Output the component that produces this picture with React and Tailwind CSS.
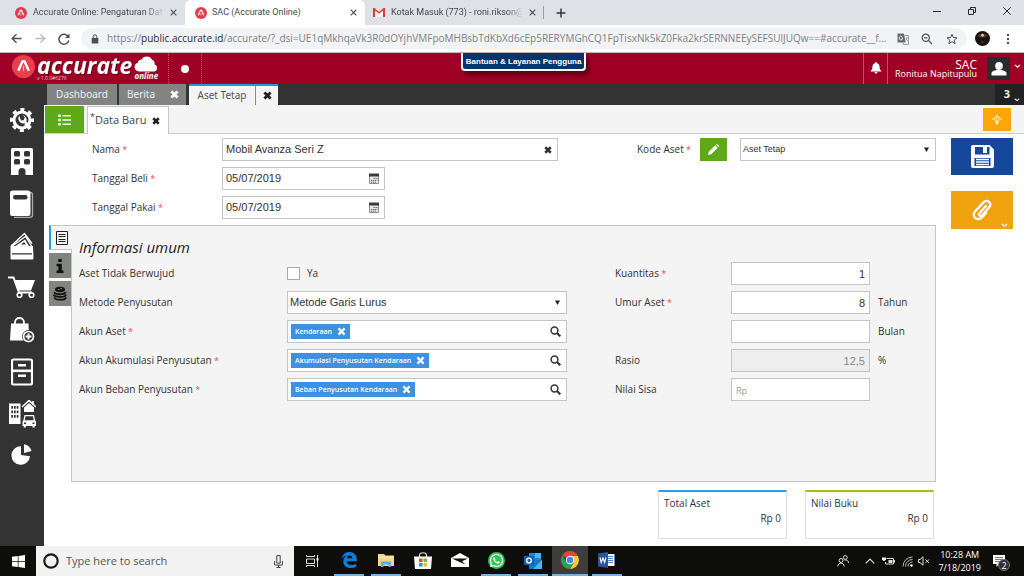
import React from "react";
import { FaWhatsapp } from "react-icons/fa6";

/* ---------- shared pieces ---------- */

const Cross = ({ className = "size-2", w = 5 }) => (
  <svg viewBox="0 0 16 16" className={className} aria-hidden="true">
    <path d="M2.5 2.5 13.5 13.5 M13.5 2.5 2.5 13.5" stroke="currentColor" strokeWidth={w} fill="none" />
  </svg>
);

const ThinCross = ({ className = "size-2" }) => (
  <svg viewBox="0 0 8 8" className={className} aria-hidden="true">
    <path d="M.8 .8 7.2 7.2 M7.2 .8 .8 7.2" stroke="currentColor" strokeWidth="1.3" fill="none" />
  </svg>
);

const Chevron = ({ className }) => (
  <svg viewBox="0 0 8 5" className={className} aria-hidden="true">
    <path d="M1 1 4 3.6 7 1" stroke="currentColor" strokeWidth="1.4" fill="none" />
  </svg>
);

const Logo = ({ className }) => (
  <svg viewBox="0 0 24 24" className={className} aria-hidden="true">
    <circle cx="12" cy="12" r="12" fill="#e63a50" />
    <path d="M6.5 16.5 11 6.5h2l4.5 10" stroke="#fff" strokeWidth="2.4" fill="none" strokeLinejoin="round" />
    <path d="M12 12v5.5" stroke="#fff" strokeWidth="1.6" opacity=".7" />
  </svg>
);

const Star = () => <span className="text-[9px] text-[#f04848]"> *</span>;

/* ---------- browser chrome ---------- */

function TabStrip() {
  return (
    <div className="flex h-[25px] items-center bg-[#dee1e6] font-['Roboto','Open_Sans',sans-serif] text-[9px] text-[#45494d]">
      <div className="flex w-[185px] items-center pl-[15px] pr-2">
        <Logo className="size-3 shrink-0" />
        <span className="ml-[6px] w-[132px] whitespace-nowrap [mask-image:linear-gradient(to_right,black_85%,transparent)]">
          Accurate Online: Pengaturan Dat
        </span>
        <button aria-label="Tutup tab" className="ml-[5px] text-[#4a4d51]"><ThinCross className="size-[7px]" /></button>
      </div>
      <div className="flex h-full w-[180px] items-center rounded-t-md bg-white pl-[10px] pr-2">
        <Logo className="size-3 shrink-0" />
        <span className="ml-[5px] flex-1 whitespace-nowrap">SAC (Accurate Online)</span>
        <button aria-label="Tutup tab" className="text-[#4a4d51]"><ThinCross className="size-[7px]" /></button>
      </div>
      <div className="flex w-[179px] items-center border-r border-[#9a9da1] pl-[8px] pr-2">
        <svg viewBox="0 0 12 9" className="h-[9px] w-3 shrink-0" aria-hidden="true">
          <path d="M1 9V1l5 4.2L11 1v8" stroke="#d93b34" strokeWidth="2" fill="none" />
          <path d="M2.2 2.6V9h7.6V2.6L6 5.8z" fill="#f4f4f4" />
        </svg>
        <span className="ml-[6px] w-[132px] whitespace-nowrap [mask-image:linear-gradient(to_right,black_88%,transparent)]">
          Kotak Masuk (773) - roni.rikson@
        </span>
        <button aria-label="Tutup tab" className="ml-[6px] text-[#4a4d51]"><ThinCross className="size-[7px]" /></button>
      </div>
      <button aria-label="Tab baru" className="ml-3 text-[#33363a]">
        <svg viewBox="0 0 10 10" className="size-[10px]"><path d="M5 .5v9M.5 5h9" stroke="currentColor" strokeWidth="1.5" /></svg>
      </button>
      <div className="ml-auto flex h-full items-center gap-[27px] pb-1 pr-[13px] text-[#2b2b2b]">
        <button aria-label="Minimalkan"><svg viewBox="0 0 8 8" className="size-2"><path d="M0 4.500h8" stroke="currentColor" /></svg></button>
        <button aria-label="Pulihkan">
          <svg viewBox="0 0 8 8" className="size-2"><path d="M.5 2.500h5v5h-5z M2.500 2.500v-2h5v5h-2" stroke="currentColor" fill="none" /></svg>
        </button>
        <button aria-label="Tutup"><svg viewBox="0 0 8 8" className="size-2"><path d="M.3 .3 7.700 7.700M7.700 .3 .3 7.700" stroke="currentColor" /></svg></button>
      </div>
    </div>
  );
}

function AddressBar() {
  return (
    <div className="flex h-[28px] items-center border-b border-[#c9b5b8] bg-white text-[#4b4e52]">
      <button aria-label="Kembali" className="ml-[11px]">
        <svg viewBox="0 0 12 12" className="size-[11px]"><path d="M11.500 6H1.500M6 1.300 1.300 6 6 10.700" stroke="currentColor" strokeWidth="1.500" fill="none" /></svg>
      </button>
      <button aria-label="Maju" className="ml-[13px] text-[#b9bbbe]">
        <svg viewBox="0 0 12 12" className="size-[11px]"><path d="M.5 6h10M6 1.300 10.700 6 6 10.700" stroke="currentColor" strokeWidth="1.400" fill="none" /></svg>
      </button>
      <button aria-label="Muat ulang" className="ml-[12px]">
        <svg viewBox="0 0 12 12" className="size-3">
          <path d="M10.300 3.700A5 5 0 1 0 10.800 7.500" stroke="currentColor" strokeWidth="1.500" fill="none" />
          <path d="M11.500 .5v4.500H7z" fill="currentColor" />
        </svg>
      </button>
      <div className="ml-[11px] flex h-[21px] min-w-0 flex-1 items-center rounded-full bg-[#f1f3f4] pl-[10px] pr-[9px]">
        <svg viewBox="0 0 8 10" className="h-[10px] w-2 shrink-0" aria-hidden="true">
          <path d="M.7 4h6.600v5.500H.7z" fill="currentColor" />
          <path d="M2.200 4.200V2.600a1.800 1.800 0 0 1 3.600 0v1.600" stroke="currentColor" fill="none" />
        </svg>
        <div className="ml-[8px] min-w-0 flex-1 overflow-hidden whitespace-nowrap text-[10px] text-[#7d8186]">
          https://<span className="text-[#2a2d30]">public.accurate.id</span>/accurate/?_dsi=UE1qMkhqaVk3R0dOYjhVMFpoMHBsbTdKbXd6cEp5RERYMGhCQ1FpTisxNk5kZ0Fka2krSERNNEEySEFSUlJUQw==#accurate__f...
        </div>
        <svg viewBox="0 0 12 12" className="size-3 shrink-0" aria-hidden="true">
          <path d="M.5 .5h6.500l1.500 9H.5z" fill="#686c70" />
          <path d="M7.300 2.500h4.200v9H6.500l-.5-2" stroke="#9a9da1" fill="none" />
          <path d="M6 5.100H4.300M5.700 5.100a1.800 1.800 0 1 1-.6-1.400" stroke="#fff" strokeWidth=".8" fill="none" />
          <path d="M8.700 5h2M9.700 4.500c0 2-.6 2.700-1.200 3.200M8.900 6l1.800 2" stroke="#85888c" strokeWidth=".7" fill="none" />
        </svg>
        <svg viewBox="0 0 12 12" className="ml-[12px] size-3 shrink-0" aria-hidden="true">
          <circle cx="4.800" cy="4.800" r="3.600" stroke="currentColor" strokeWidth="1.200" fill="none" />
          <path d="M7.500 7.500 11 11M3.200 4.800h3.200" stroke="currentColor" strokeWidth="1.200" />
        </svg>
        <svg viewBox="0 0 12 12" className="ml-[13px] size-3 shrink-0" aria-hidden="true">
          <path d="M6 1.200 7.400 4.500 11 4.800 8.300 7.100 9.100 10.600 6 8.700 2.900 10.600 3.700 7.100 1 4.800 4.600 4.500z" stroke="currentColor" fill="none" />
        </svg>
      </div>
      <svg viewBox="0 0 16 16" className="ml-[8px] size-[15px] shrink-0" aria-hidden="true">
        <circle cx="8" cy="8" r="8" fill="#17110d" />
        <path d="M3 5c2-3 8-3 10 0l-2 2H5z" fill="#4d3a2b" />
        <circle cx="8" cy="4.500" r="1.500" fill="#d8c4a8" />
        <path d="M5.500 13c0-4 5-4 5 0z" fill="#33261c" />
      </svg>
      <button aria-label="Menu" className="ml-[16px] mr-[14px]">
        <svg viewBox="0 0 4 12" className="h-3 w-1"><g fill="currentColor"><circle cx="2" cy="2" r="1.200" /><circle cx="2" cy="6" r="1.200" /><circle cx="2" cy="10" r="1.200" /></g></svg>
      </button>
    </div>
  );
}

/* ---------- application header ---------- */

function Header() {
  return (
    <header className="relative flex h-[31px] shrink-0 bg-[#a00025] text-white">
      <div className="flex w-[169px] items-start border-r border-dotted border-[#c2556d] pl-3 pt-[2px]">
        <svg viewBox="0 0 24 24" className="size-[23px] shrink-0" aria-hidden="true">
          <circle cx="12" cy="12" r="12" fill="#e6404f" />
          <path d="M6.500 16.500 11 6.500h2l4.500 10" stroke="#fff" strokeWidth="2.600" fill="none" strokeLinejoin="round" />
          <path d="M12 11.500v5" stroke="#fbd5d9" strokeWidth="1.200" />
        </svg>
        <div className="ml-[2px]">
          <div className="text-[23px] font-bold italic leading-[20px] drop-shadow-[1px_1px_0px_rgba(70,0,15,.6)]">accurate</div>
          <div className="whitespace-nowrap text-[5px] leading-[7px] text-[#f0c4cc]">v 1.0.0#6276</div>
        </div>
        <div className="ml-[2px] flex flex-col items-center">
          <svg viewBox="0 0 24 16" className="h-[17px] w-6" aria-hidden="true">
            <path d="M5 16a4.500 4.500 0 0 1-1.200-8.800A4 4 0 0 1 7.500 4 6 6 0 0 1 18 4.200 4.200 4.200 0 0 1 20.500 9 3.600 3.600 0 0 1 20 16z" fill="#fff" />
          </svg>
          <span className="text-[8px] font-bold italic leading-[8px]">online</span>
        </div>
      </div>
      <div className="flex w-[33px] items-center justify-center border-r border-dotted border-[#c2556d]">
        <span className="size-2 rounded-full bg-white" />
      </div>
      <button className="absolute left-[45%] top-0 z-10 h-[18px] whitespace-nowrap rounded-b border-2 border-t-0 border-white bg-[#063567] px-[3px] font-['Liberation_Sans',sans-serif] text-[8px] font-bold leading-[15px] shadow-[3px_4px_4px_rgba(40,0,10,.6)]">
        Bantuan &amp; Layanan Pengguna
      </button>
      <div className="ml-auto flex">
        <button aria-label="Notifikasi" className="flex w-[25px] items-center justify-center border-l border-r border-[#bd4f67] pb-px">
          <svg viewBox="0 0 12 12" className="size-3"><path d="M6 .3c.8 0 1 .6 1 1 1.800.4 2.600 1.800 2.600 3.700 0 2.200.7 3.200 2 4.500H.4C1.700 8.200 2.400 7.200 2.400 5c0-1.900.8-3.300 2.600-3.700 0-.4.200-1 1-1zM4.500 10h3a1.500 1.500 0 0 1-3 0z" fill="#fff" /></svg>
        </button>
        <div className="flex w-[89px] flex-col items-end pt-[6px]">
          <span className="text-[12px] leading-[11px]">SAC</span>
          <span className="whitespace-nowrap text-[9px] leading-[8px]">Ronitua Napitupulu</span>
        </div>
        <button aria-label="Profil" className="ml-[10px] flex items-start gap-1 pr-[3px] pt-1">
          <span className="flex size-[23px] items-center justify-center bg-[#2c2a2c]">
            <svg viewBox="0 0 16 14" className="h-[14px] w-4"><ellipse cx="8" cy="4" rx="3.800" ry="4" fill="#fff" /><path d="M.5 13.500V11c0-1.500 3-2.600 5-3h5c2 .4 5 1.500 5 3v2.500z" fill="#fff" /></svg>
          </span>
          <Chevron className="mt-[7px] w-[7px]" />
        </button>
      </div>
    </header>
  );
}

/* ---------- sidebar ---------- */

const sideIcons = [
  ["Pengaturan", (
    <svg viewBox="0 0 24 24" className="size-6">
      <circle cx="12" cy="12" r="8" stroke="#fff" strokeWidth="3" fill="none" />
      <circle cx="12" cy="12" r="10.500" stroke="#fff" strokeWidth="3" strokeDasharray="4.100 4.147" strokeDashoffset="2" fill="none" />
      <path d="m15.500 15.500 3.800 3.800" stroke="#fff" strokeWidth="4" />
      <path d="M9.200 7.800a5 5 0 0 0 5.500 7.500l2.800 2.800 1.600-1.600-2.800-2.800a4.800 4.800 0 0 0-3.500-6.500l2 2.300-1.200 2.800-2.600.2z" fill="#fff" />
    </svg>)],
  ["Perusahaan", (
    <svg viewBox="0 0 22 28" className="h-7 w-[22px]">
      <path fillRule="evenodd" d="M1.500 0h19A1.500 1.500 0 0 1 22 1.500V27h-7.500v-3.500a3.500 3.500 0 0 0-7 0V27H0V1.500A1.500 1.500 0 0 1 1.500 0zM4.500 3Q3 3 3 4.500v2.500Q3 8.500 4.500 8.500h3Q9 8.500 9 7V4.500Q9 3 7.500 3zM14.500 3Q13 3 13 4.500v2.500q0 1.500 1.500 1.500h3Q19 8.500 19 7V4.500Q19 3 17.500 3zM4.500 11Q3 11 3 12.500V15q0 1.500 1.500 1.500h3Q9 16.500 9 15v-2.500Q9 11 7.500 11zM14.500 11q-1.500 0-1.500 1.500V15q0 1.500 1.500 1.500h3Q19 16.500 19 15v-2.500q0-1.500-1.500-1.500z" fill="#fff" />
    </svg>)],
  ["Buku Besar", (
    <svg viewBox="0 0 24 28" className="h-7 w-6">
      <path d="M20 2.500c1.500 0 2.500.5 2.500 2V25c0 1.500-1 2.300-2.300 2.300H4" stroke="#aaa" strokeWidth="1.300" fill="none" />
      <rect x="0" y=".5" width="20.500" height="25.500" rx="2.500" fill="#fff" />
      <rect x="3" y="5" width="14.500" height="4.500" rx="2.200" fill="#333" />
    </svg>)],
  ["Kas & Bank", (
    <svg viewBox="0 0 24 28" className="h-7 w-6">
      <path d="M1 14 14.500 1.500 22 11.500M2.500 14l13-9.500 6 9.500" stroke="#fff" strokeWidth="1.300" fill="none" />
      <path d="M5.500 14 15 7.500l4 6.500z" fill="#fff" />
      <path d="m11 12.500 3-2.500 2 2.500z" fill="#333" />
      <path fillRule="evenodd" d="M.5 14H23l.5 12c0 1-.6 1.500-1.500 1.500H2c-1 0-1.500-.5-1.500-1.500zM2 22.500h20v-1.300H2z" fill="#fff" />
    </svg>)],
  ["Penjualan", (
    <svg viewBox="0 0 28 23" className="h-[23px] w-7">
      <path d="M0 1.500h5.500L11 16.500h13" stroke="#fff" strokeWidth="2" fill="none" />
      <path d="M6.500 4H27l-4 10.500H10.500z" fill="#fff" />
      <circle cx="11.500" cy="19" r="2.300" stroke="#fff" strokeWidth="1.600" fill="none" />
      <circle cx="23.500" cy="19" r="2.300" stroke="#fff" strokeWidth="1.600" fill="none" />
    </svg>)],
  ["Pembelian", (
    <svg viewBox="0 0 25 26" className="h-[26px] w-[25px]">
      <path d="M5 8V5.500c0-6 9-6 9 0V8" stroke="#fff" strokeWidth="1.800" fill="none" />
      <path d="M1 6.500h17.500l.5 17H0z" fill="#fff" />
      <circle cx="18.500" cy="19.500" r="6.500" fill="#333" />
      <circle cx="18.500" cy="19.500" r="5" stroke="#fff" strokeWidth="1.700" fill="none" />
      <path d="M18.500 16.500v6M15.500 19.500h6" stroke="#fff" strokeWidth="2" />
    </svg>)],
  ["Persediaan", (
    <svg viewBox="0 0 22 28" className="h-7 w-[22px]">
      <rect x="1" y="1.500" width="20" height="25" rx="1.500" stroke="#fff" strokeWidth="2.200" fill="none" />
      <path d="M2 12.800h18" stroke="#fff" strokeWidth="2.600" />
      <path d="M7 6h8v2.500H7zM7 16.500h8V19H7z" fill="#fff" />
    </svg>)],
  ["Aset Tetap", (
    <svg viewBox="0 0 27 28" className="h-7 w-[27px]">
      <path fillRule="evenodd" d="M0 3.500h11.500V24H0zM2.300 6v2.700h1.700V6zm2.700 0v2.700h1.700V6zm2.700 0v2.700h1.700V6zM2.300 10.500v2.700h1.700v-2.700zm2.700 0v2.700h1.700v-2.700zm2.700 0v2.700h1.700v-2.700zM2.300 15v2.700h1.700V15zm2.700 0v2.700h1.700V15zm2.700 0v2.700h1.700V15z" fill="#fff" />
      <path d="m13 7 7-6.500L27 7M24 1v4" stroke="#fff" strokeWidth="1.600" fill="none" />
      <path d="M15 7.500 20 3l5 4.500V12H15z" fill="#fff" />
      <path fillRule="evenodd" d="M15.500 15h9.500l1.200 5.500.8 1V26h-1.300v1.500h-2.200V26h-6.600v1.500h-2.200V26h-1.200v-4.500l.8-1zM16.500 16.200l-.8 4h9.100l-.8-4zM15 22.500V24h2v-1.500zm8.500 0V24h2v-1.500z" fill="#fff" />
    </svg>)],
  ["Laporan", (
    <svg viewBox="0 0 22 23" className="h-[23px] w-[22px]">
      <path d="M10 11V2.200a9.300 9.300 0 1 0 9 10z" fill="#fff" />
      <path d="M13 9V.3A9.500 9.500 0 0 1 20.500 7z" fill="#fff" />
    </svg>)],
];

function Sidebar() {
  return (
    <nav className="w-11 shrink-0 bg-[#333] pt-[15px]">
      {sideIcons.map(([label, icon]) => (
        <button key={label} aria-label={label} className="flex h-[42px] w-full items-center justify-center pb-px">{icon}</button>
      ))}
    </nav>
  );
}

/* ---------- application tabs ---------- */

function AppTabs() {
  return (
    <div className="flex h-[21px] bg-[#333] pl-[3px] text-[11px] text-[#eee]">
      <button className="w-[70px] bg-[#828482] font-['Noto_Sans',sans-serif] text-[10px]">Dashboard</button>
      <div className="ml-[2px] flex w-[67px] items-center bg-[#828482] pl-2 pr-[7px] font-['Noto_Sans',sans-serif] text-[10px]">
        <button className="flex-1 text-left">Berita</button>
        <button aria-label="Tutup Berita" className="text-white"><Cross className="size-[9px]" /></button>
      </div>
      <div className="ml-[3px] flex w-[89px] border-t-2 border-[#1e98de] bg-[#f4f4f4] font-['Noto_Sans',sans-serif] text-[10px] text-[#555]">
        <button className="flex-1 border-r border-[#8a8a8a]">Aset Tetap</button>
        <button aria-label="Tutup Aset Tetap" className="flex w-[22px] items-center justify-center text-[#222]"><Cross className="size-[9px]" /></button>
      </div>
      <button aria-label="3 tab terbuka" className="ml-auto flex w-[29px] items-center justify-end gap-1 bg-[#222] pr-[4px] font-bold">
        3 <Chevron className="mt-[10px] w-[6px]" />
      </button>
    </div>
  );
}

function SubTabs() {
  return (
    <div className="flex h-[29px] items-end border-b border-[#cfcfcf] bg-[#f4f4f4] pl-px">
      <button aria-label="Daftar" className="flex h-[27px] w-[39px] items-center justify-center bg-[#5fa918]">
        <svg viewBox="0 0 13 12" className="h-3 w-[13px]">
          <path d="M4.500 1.800H13M4.500 6H13M4.500 10.200H13" stroke="#f0ffe0" strokeWidth="1.500" />
          <path d="M0 1.800h3M0 6h3M0 10.200h3" stroke="#d8f0bd" strokeWidth="2.400" />
        </svg>
      </button>
      <div className="-mb-px ml-[3px] flex h-[28px] w-[82px] items-center border border-b-0 border-[#c5c5c5] bg-white">
        <button className="flex-1 whitespace-nowrap pl-[2px] text-left text-[11px] text-[#444]"><sup className="text-[9px]">*</sup>Data Baru</button>
        <button aria-label="Tutup Data Baru" className="mr-[8px] text-[#222]"><Cross className="size-[8px]" /></button>
      </div>
      <button aria-label="Petunjuk" className="mb-[2px] ml-auto mr-[13px] flex h-[23px] w-7 items-center justify-center bg-[#ffa60a]">
        <svg viewBox="0 0 10 12" className="h-3 w-[10px]">
          <circle cx="5" cy="4.800" r="2.600" stroke="#ffeebb" fill="none" />
          <path d="M5 .5v7M0 5h2.500M7.500 5H10" stroke="#ffeebb" fill="none" />
          <path d="M3.300 8h3.400L5 11.300z" fill="#fff" />
        </svg>
      </button>
    </div>
  );
}

/* ---------- form ---------- */

const boxCls = "h-[23px] border border-[#c4c4c4] bg-white font-['Liberation_Sans',sans-serif] text-[11px] text-[#333] outline-none";

const CalendarIcon = () => (
  <svg viewBox="0 0 10 11" className="h-[11px] w-[10px]" aria-hidden="true">
    <path d="M.5 1.500h9v9h-9z" stroke="#8f8f8f" fill="#e6e6e6" />
    <path d="M0 .5h10v3H0z" fill="#3a3a3a" />
    <path d="M4.500 5.500H9M2 7.500h6.500M2 9.200h5" stroke="#666" strokeDasharray="1.300 .7" />
  </svg>
);

function DateRow({ id, label }) {
  return (
    <div className="flex items-center">
      <label htmlFor={id} className="w-[130px]">{label}<Star /></label>
      <div className={"flex w-[163px] items-center pr-[5px] " + boxCls}>
        <input id={id} defaultValue="05/07/2019" className="w-full min-w-0 bg-transparent pl-[3px] outline-none" />
        <button type="button" aria-label={"Pilih " + label}><CalendarIcon /></button>
      </div>
    </div>
  );
}

function Triangle() {
  return (
    <svg viewBox="0 0 6 6" className="pointer-events-none absolute right-[7px] top-[9px] size-[5px]" aria-hidden="true">
      <path d="M0 .5h6L3 6z" fill="#222" />
    </svg>
  );
}

function AccountRow({ id, label, chip }) {
  return (
    <div className="flex items-center">
      <label htmlFor={id} className="w-[208px] shrink-0 whitespace-nowrap">{label}<Star /></label>
      <div className={"flex min-w-0 flex-1 items-center pl-[3px] pr-[5px] " + boxCls}>
        <span className="flex h-[15px] shrink-0 items-center gap-[5px] bg-[#3f90df] pl-1 pr-1 font-['Open_Sans','Noto_Sans',sans-serif] text-[7px] font-semibold text-white">
          <span className="pt-[2px]">{chip}</span>
          <button type="button" aria-label={"Hapus " + chip}><Cross className="size-[9px]" w={4} /></button>
        </span>
        <input id={id} className="min-w-0 flex-1 bg-transparent outline-none" />
        <button type="button" aria-label={"Cari " + label}>
          <svg viewBox="0 0 11 11" className="size-[11px]">
            <circle cx="4.500" cy="4.500" r="3.400" stroke="#333" strokeWidth="1.500" fill="none" />
            <path d="M7 7l3.300 3.300" stroke="#333" strokeWidth="2.200" />
          </svg>
        </button>
      </div>
    </div>
  );
}

function NumberRow({ id, label, required, value, unit, readOnly, placeholder }) {
  return (
    <div className="flex items-center">
      <label htmlFor={id} className="w-[116px] shrink-0">{label}{required && <Star />}</label>
      <input
        id={id}
        aria-label={label ? undefined : unit}
        defaultValue={value}
        readOnly={readOnly}
        placeholder={placeholder}
        className={"w-[139px] px-1 placeholder:text-left placeholder:font-['Open_Sans'] placeholder:text-[9px] placeholder:text-[#999] text-right " + boxCls + (readOnly ? " bg-[#eee]! text-[#888]!" : "")}
      />
      <span className="ml-2">{unit}</span>
    </div>
  );
}

function InfoPanel() {
  return (
    <div className="flex flex-1 pl-[5px]">
      <div className="z-10 -mr-px flex w-[23px] flex-col gap-[3px]">
        <button type="button" aria-label="Informasi umum" className="flex h-[25px] items-center justify-center border-b border-l-2 border-t border-[#c4c4c4] border-l-[#2b9be0] bg-[#f4f4f4]">
          <svg viewBox="0 0 12 14" className="h-[14px] w-3"><path d="M.5 .5h11v13H.5zM2.500 3.500h7M2.500 5.500h7M2.500 8.500h7M2.500 10.500h7" stroke="#222" fill="none" /></svg>
        </button>
        <button type="button" aria-label="Keterangan" className="mr-px flex h-[25px] items-center justify-center bg-[#828482]">
          <svg viewBox="0 0 8 14" className="h-[14px] w-2"><path d="M2.300 0h3.400v3H2.300zM.5 4.800h5.300v6.700h1.700V14H.5v-2.500h1.800V7.200H.5z" fill="#111" /></svg>
        </button>
        <button type="button" aria-label="Pengeluaran" className="mr-px flex h-[25px] items-center justify-center bg-[#828482]">
          <svg viewBox="0 0 14 15" className="h-[15px] w-[14px]">
            <ellipse cx="7" cy="3.500" rx="5" ry="2.800" fill="#111" />
            <path d="M5 3.500h1.500M7.500 2.500h1.500" stroke="#888" />
            <path d="M1.500 6c0 3 10.500 3 11 0M.8 8.500c.5 3.200 12 3.200 12 0M1.500 11.300c.5 3.200 11 3.200 11.300 0" stroke="#111" strokeWidth="1.800" fill="none" />
          </svg>
        </button>
      </div>
      <section className="min-w-0 flex-1 border border-[#c4c4c4] bg-[#f4f4f4] pb-3 pl-[7px]">
        <h2 className="h-[36px] pt-[10px] text-[15px] italic leading-[22px] text-[#222]">Informasi umum</h2>
        <div className="flex gap-12">
          <div className="flex min-w-0 flex-1 flex-col gap-[6px]">
            <div className="flex h-[23px] items-center">
              <span className="w-[208px] shrink-0">Aset Tidak Berwujud</span>
              <label className="flex items-center gap-[7px]">
                <input type="checkbox" className="size-[13px] appearance-none border border-[#aaa] bg-white checked:bg-[#3f90df]" />
                Ya
              </label>
            </div>
            <div className="flex items-center">
              <label htmlFor="metode" className="w-[208px] shrink-0">Metode Penyusutan</label>
              <div className="relative min-w-0 flex-1">
                <select id="metode" className={"w-full appearance-none pl-[2px] " + boxCls}>
                  <option>Metode Garis Lurus</option>
                </select>
                <Triangle />
              </div>
            </div>
            <AccountRow id="akun-aset" label="Akun Aset" chip="Kendaraan" />
            <AccountRow id="akun-akumulasi" label="Akun Akumulasi Penyusutan" chip="Akumulasi Penyusutan Kendaraan" />
            <AccountRow id="akun-beban" label="Akun Beban Penyusutan" chip="Beban Penyusutan Kendaraan" />
          </div>
          <div className="flex w-[320px] shrink-0 flex-col gap-[6px]">
            <NumberRow id="kuantitas" label="Kuantitas" required value="1" />
            <NumberRow id="umur" label="Umur Aset" required value="8" unit="Tahun" />
            <NumberRow id="bulan" label="" unit="Bulan" />
            <NumberRow id="rasio" label="Rasio" value="12,5" unit="%" readOnly />
            <NumberRow id="nilai-sisa" label="Nilai Sisa" placeholder="Rp" />
          </div>
        </div>
      </section>
    </div>
  );
}

function Form() {
  return (
    <form className="flex min-w-0 flex-1 flex-col text-[10px] text-[#333]" onSubmit={(e) => e.preventDefault()}>
      <div className="mb-[6px] flex flex-col gap-[6px] pl-12">
        <div className="flex items-center gap-[79px]">
          <div className="flex min-w-0 flex-1 items-center">
            <label htmlFor="nama" className="w-[130px] shrink-0">Nama<Star /></label>
            <div className={"flex min-w-0 flex-1 items-center pr-[5px] " + boxCls}>
              <input id="nama" defaultValue="Mobil Avanza Seri Z" className="min-w-0 flex-1 bg-transparent pl-[3px] outline-none" />
              <button type="button" aria-label="Hapus nama"><Cross className="size-[8px]" /></button>
            </div>
          </div>
          <div className="flex w-[299px] shrink-0 items-center">
            <label htmlFor="kode" className="w-[63px]">Kode Aset<Star /></label>
            <button type="button" aria-label="Ubah kode" className="flex h-[23px] w-[27px] items-center justify-center bg-[#5fa918]">
              <svg viewBox="0 0 11 11" className="size-[11px]"><path d="M0 11 .8 7.800 7.300 1.300 9.700 3.700 3.200 10.200zM8 .6C8.600 0 9.200 0 9.700.5l.8.8c.5.500.5 1.100 0 1.600z" fill="#fff" /></svg>
            </button>
            <div className="relative ml-[13px] flex-1">
              <select id="kode" className={"w-full appearance-none pl-[2px] " + boxCls + " text-[9px]!"}>
                <option>Aset Tetap</option>
              </select>
              <Triangle />
            </div>
          </div>
        </div>
        <DateRow id="tanggal-beli" label="Tanggal Beli" />
        <DateRow id="tanggal-pakai" label="Tanggal Pakai" />
      </div>
      <InfoPanel />
      <div className="mr-[2px] mt-2 flex justify-end gap-[18px]">
        {[["Total Aset", "border-t-[#2e9fdb]"], ["Nilai Buku", "border-t-[#a6bf1b]"]].map(([name, top]) => (
          <div key={name} className={"h-[49px] w-[129px] border border-t-2 border-[#ddd] px-[5px] pt-[4px] leading-[15px] " + top}>
            <div>{name}</div>
            <div className="text-right">Rp 0</div>
          </div>
        ))}
      </div>
    </form>
  );
}

function Actions() {
  return (
    <div className="flex w-[62px] shrink-0 flex-col gap-4">
      <button aria-label="Simpan" className="flex h-[37px] items-center justify-center bg-[#15479a]">
        <svg viewBox="0 0 23 23" className="size-[23px]">
          <path fillRule="evenodd" d="M2 0h16.500L23 4.500V21a2 2 0 0 1-2 2H2a2 2 0 0 1-2-2V2a2 2 0 0 1 2-2zM4 2v7.500h14.500V2zm-.5 11v8h16v-8z" fill="#fff" />
          <path d="M12 2h4v6h-4z" fill="#fff" />
          <path d="M5 14.500h13M5 17h13M5 19.500h13" stroke="#fff" strokeWidth="1.300" />
        </svg>
      </button>
      <button aria-label="Lampiran" className="relative flex h-[38px] items-center justify-center bg-[#f1a30f] text-white">
        <svg viewBox="0 0 24 24" className="size-6">
          <path d="M16 8 9.500 15.200c-1.500 1.900 1 3.700 2.500 2.200l7.200-8.200c3.300-4.500-2.200-8.600-6-4.600L5 13.500c-4 5 2.500 10.500 7.500 5.500l3.500-4" stroke="currentColor" strokeWidth="2.300" fill="none" strokeLinecap="round" />
        </svg>
        <Chevron className="absolute bottom-[2px] right-[5px] w-[7px]" />
      </button>
    </div>
  );
}

/* ---------- taskbar ---------- */

const apps = [
  ["Edge", true, (
    <svg viewBox="0 0 16 16" className="size-4"><path d="M.5 7.300C1.200 2.500 4.500 0 8.500 0c4.600 0 7.300 3.200 7.300 7.600v1.600H5.700c.2 2.700 2.400 3.800 4.800 3.800 1.700 0 3.200-.5 4.600-1.300v3.100c-1.500.8-3.300 1.200-5.300 1.200C5.200 16 2.300 13.500 2.300 9.500c0-2.700 1.500-5 3.700-6.200C3.500 3.600 1.500 5.300.5 7.300zm5.400-1h5.500c0-1.800-1-2.800-2.700-2.800-1.500 0-2.500 1.100-2.800 2.800z" fill="#0f7fdc" /></svg>)],
  ["File Explorer", true, (
    <svg viewBox="0 0 16 14" className="h-[14px] w-4"><path d="M0 1h6l1.500 1.500H16V13H0z" fill="#f8d483" /><path d="M0 3.500h16V5H0z" fill="#fbe5ae" /><path d="M3 14V8.500h10V14h-2.500v-2.500h-5V14z" fill="#4fb1e8" /></svg>)],
  ["Store", false, (
    <svg viewBox="0 0 18 17" className="h-[17px] w-[18px]"><path d="M5.500 5V3c0-3 7-3 7 0v2" stroke="#ddd" strokeWidth="1.200" fill="none" /><path d="M0 4.500h18l-1 12.500H1z" fill="#fff" /><path d="M5 6.500h3.600V10H5z" fill="#e8502b" /><path d="M9.500 6.500H13V10H9.500z" fill="#7db829" /><path d="M5 11h3.600v3.500H5z" fill="#1d9ee2" /><path d="M9.500 11H13v3.500H9.500z" fill="#f6b71c" /></svg>)],
  ["Mail", false, (
    <svg viewBox="0 0 18 14" className="h-[14px] w-[18px]"><path d="M0 5 9 0l9 5v9H0z" fill="#fff" /><path d="M1 5.500h16l-6 2.700 3.500 3.300L8.500 9z" fill="#111" /></svg>)],
  ["WhatsApp", true, (
    <span className="flex size-[17px] items-center justify-center rounded-full bg-[#35c15a]"><FaWhatsapp className="size-[15px] text-white" /></span>)],
  ["Outlook", true, (
    <svg viewBox="0 0 18 17" className="h-[17px] w-[18px]"><path d="M5 1h12v10H5z" fill="#1f8ad8" /><path d="M11 1h6v5h-6z" fill="#45b8ef" /><path d="M5 7l13 1v9H5z" fill="#1478c8" /><path d="m18 8-9 9h9z" fill="#45b8ef" /><path d="M0 4h10v9H0z" fill="#0a63b8" /><circle cx="5" cy="8.500" r="2.400" stroke="#fff" strokeWidth="1.400" fill="none" /></svg>)],
  ["Chrome", true, (
    <svg viewBox="0 0 18 18" className="size-[18px]"><path d="M9 9 1.200 4.500A9 9 0 0 1 16.800 4.500z" fill="#e0443a" /><path d="M9 9V5h7.900A9 9 0 0 1 9 18l3.500-6z" fill="#fbc936" /><path d="M5.500 11 1.200 4.500A9 9 0 0 0 9 18l3.500-6z" fill="#2f9e52" /><circle cx="9" cy="9" r="4.200" fill="#fff" /><circle cx="9" cy="9" r="3.300" fill="#4688f1" /></svg>)],
  ["Word", true, (
    <svg viewBox="0 0 17 16" className="h-4 w-[17px]"><path d="M8 2h8.500v12H8z" fill="#f3f6fb" /><path d="M10 4.500h5M10 6.500h5M10 8.500h5M10 10.500h5" stroke="#5a84c4" /><path d="M0 1.500 10 0v16L0 14.500z" fill="#2a5699" /><path d="m2 5.500 1.200 5L5 6l1.600 4.500L8 5.500" stroke="#fff" strokeWidth="1.100" fill="none" /></svg>)],
];

function Taskbar() {
  return (
    <footer className="flex h-[30px] shrink-0 items-stretch bg-[#0d0d0b] text-white">
      <button aria-label="Mulai" className="flex w-9 items-center justify-center">
        <svg viewBox="0 0 13 13" className="size-[13px]"><path d="M0 1.800 5.800 1v5.200H0zM6.500.9 13 0v6.200H6.500zM0 6.900h5.800V12L0 11.200zM6.500 6.900H13V13l-6.500-.9z" fill="#fff" /></svg>
      </button>
      <div className="flex w-[258px] items-center bg-[#f2f2f2] pl-[7px] pr-[11px] text-[#444]">
        <svg viewBox="0 0 16 16" className="size-4 shrink-0" aria-hidden="true"><circle cx="8" cy="8" r="6.700" stroke="#1a1a1a" strokeWidth="2.200" fill="none" /></svg>
        <input aria-label="Cari" placeholder="Type here to search" className="ml-[7px] min-w-0 flex-1 bg-transparent text-[11px] outline-none placeholder:text-[#555]" />
        <svg viewBox="0 0 9 13" className="h-[13px] w-[9px]" aria-hidden="true"><path d="M2.800 .6h3.400v7.500H2.800zM.6 6v4h7.800V6M4.500 10v2.500M2.500 12.500h4" stroke="#444" fill="none" /></svg>
      </div>
      <button aria-label="Tampilan tugas" className="flex w-[37px] items-center justify-center">
        <svg viewBox="0 0 13 12" className="h-3 w-[13px]"><path d="M.5 0v1.500h8V0M.5 4h8v4.500h-8zM.5 12v-1.500h8V12M11.500 0v12" stroke="#ddd" fill="none" /><path d="M10.500 3h2v2.500h-2z" fill="#fff" /></svg>
      </button>
      <div className="grid w-[294px] grid-cols-8">
        {apps.map(([name, open, icon]) => (
          <button key={name} aria-label={name} className={"flex flex-col items-center " + (name === "Chrome" ? "bg-[#3d3e3c]" : "")}>
            <span className="flex flex-1 items-center">{icon}</span>
            <span className={"h-[2px] " + (name === "Chrome" ? "w-full" : "w-[30px]") + (open ? " bg-[#76b0e6]" : "")} />
          </button>
        ))}
      </div>
      <div className="ml-auto flex items-center">
        <svg viewBox="0 0 12 12" className="size-3" aria-hidden="true"><circle cx="4" cy="5.500" r="2" stroke="#ddd" fill="none" /><path d="M.8 11.500c0-4.500 6.400-4.500 6.400 0" stroke="#ddd" fill="none" /><circle cx="8.300" cy="2.500" r="1.900" stroke="#ddd" fill="none" /><path d="M7.500 5c2.500-.5 4 .8 4 3" stroke="#ddd" fill="none" /></svg>
        <svg viewBox="0 0 10 6" className="ml-[16px] h-[6px] w-[10px]" aria-hidden="true"><path d="M.7 5.300 5 1l4.300 4.300" stroke="#ddd" strokeWidth="1.200" fill="none" /></svg>
        <svg viewBox="0 0 13 10" className="ml-[7px] h-[10px] w-[13px]" aria-hidden="true"><path d="M4.500 2.500h7v5.500H3.500V6M12.500 4v2.500" stroke="#ddd" fill="none" /><path d="M6.500 4h4v3h-4z" fill="#ddd" /><path d="M0 1.500h4v2L2.500 5h-1L0 3.500z" fill="#eee" /></svg>
        <svg viewBox="0 0 11 11" className="ml-[7px] size-[11px]" aria-hidden="true"><path d="M1 10.500A9.500 9.500 0 0 1 10.500 1M3.500 10.500a7 7 0 0 1 7-7M6 10.500A4.500 4.500 0 0 1 10.500 6" stroke="#bbb" fill="none" /><circle cx="9.500" cy="9.500" r="1.200" fill="#fff" /></svg>
        <svg viewBox="0 0 12 10" className="ml-[5px] h-[10px] w-3" aria-hidden="true"><path d="M.5 3.500H2L5 .8v8.400L2 6.500H.5zM7.500 3.500l3.500 3.500M11 3.500 7.500 7" stroke="#ddd" fill="none" /></svg>
        <div className="ml-[8px] whitespace-nowrap text-center text-[9px] leading-[13px]">10:28 AM<br />7/18/2019</div>
        <div className="relative ml-[12px] mr-[19px]">
          <svg viewBox="0 0 12 12" className="size-3" aria-hidden="true"><path d="M0 0h12v9H6l-2.500 3V9H0z" fill="#fff" /><path d="M2 2.500h8M2 4.500h8M2 6.500h6" stroke="#555" strokeWidth=".8" /></svg>
          <span className="absolute left-[5px] top-[4px] flex size-3 items-center justify-center rounded-full border border-[#777] bg-[#2f2f2f] text-[9px] leading-none">2</span>
        </div>
      </div>
    </footer>
  );
}

export default function App() {
  return (
    <div className="flex min-h-screen flex-col bg-white font-['Open_Sans','Noto_Sans',sans-serif]">
      <TabStrip />
      <AddressBar />
      <Header />
      <div className="flex flex-1">
        <Sidebar />
        <div className="flex min-w-0 flex-1 flex-col">
          <AppTabs />
          <SubTabs />
          <main className="flex flex-1 gap-[15px] pb-[7px] pr-[11px] pt-[4px]">
            <Form />
            <Actions />
          </main>
        </div>
      </div>
      <Taskbar />
    </div>
  );
}
